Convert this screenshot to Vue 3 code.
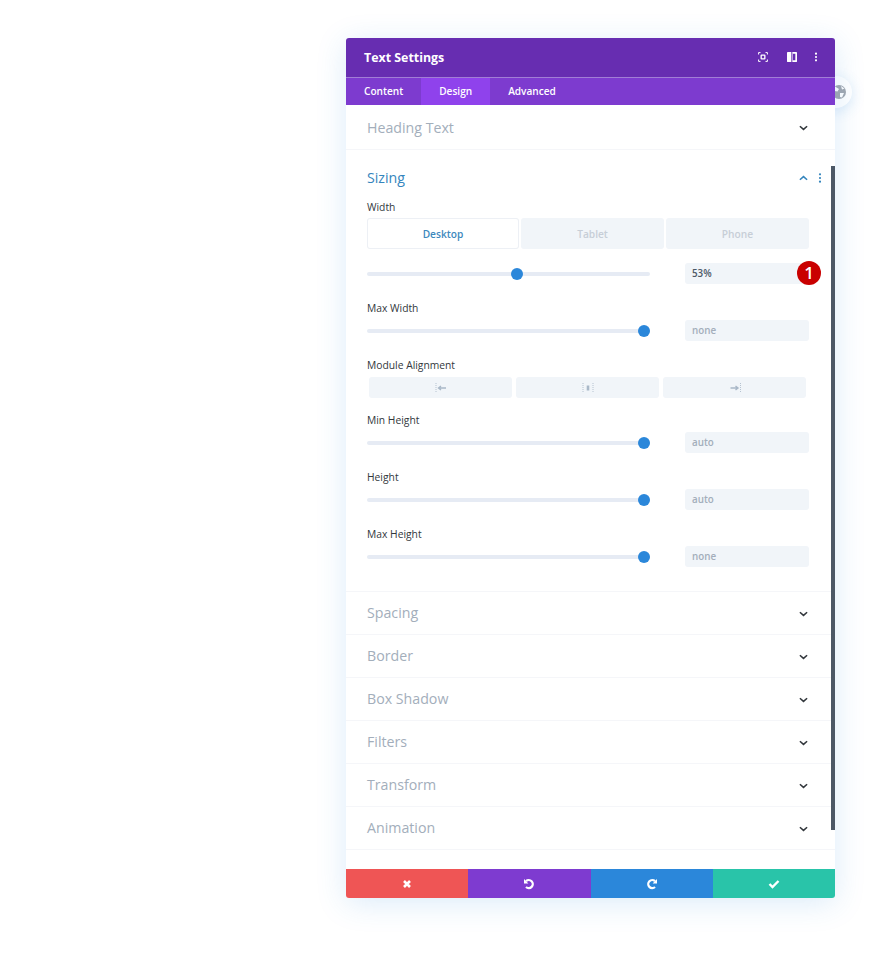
<script setup>
const closedTop = ["Spacing", "Border", "Box Shadow", "Filters", "Transform", "Animation"];
const sliders = [
  { label: "Max Width", value: "none" },
  { label: "Min Height", value: "auto" },
  { label: "Height", value: "auto" },
  { label: "Max Height", value: "none" },
];
</script>

<template>
  <main class="page">
    <div class="panel-wrap">
      <div class="portability">
        <svg class="globe" viewBox="0 0 14 14" width="14" height="14">
          <circle cx="7" cy="7" r="7" fill="#a3a8b0" />
          <path d="M3 1.5 L7 4 L5.5 6.5 L2.5 6 Z M8 8 L12 8 L10 12.5 L8 12 Z M9 1 L12.5 3.5 L10 4.5 Z" fill="#fff" />
        </svg>
      </div>
      <section class="panel">
        <header class="head">
          <h1>Text Settings</h1>
          <div class="head-icons">
            <svg class="ic-focus" viewBox="0 0 12 12" width="10" height="10" fill="none" stroke="#fff">
              <path d="M.7 3V.7H3M9 .7h2.3V3M11.3 9v2.3H9M3 11.3H.7V9" stroke-width="1.2" />
              <rect x="3.8" y="3.8" width="4.4" height="4.4" rx=".5" stroke-width="1.6" />
            </svg>
            <svg class="ic-cols" viewBox="0 0 12 12" width="10" height="10">
              <path d="M0 1a1 1 0 0 1 1-1h10a1 1 0 0 1 1 1v10a1 1 0 0 1-1 1H1a1 1 0 0 1-1-1z M7 2v8h3V2z" fill="#fff" fill-rule="evenodd" />
              <path d="M5.2 0h1.2v12H5.2z" fill="#6a2db4" />
            </svg>
            <svg viewBox="0 0 4 12" width="4" height="10" fill="#fff">
              <circle cx="2" cy="2" r="1.3" /><circle cx="2" cy="6" r="1.3" /><circle cx="2" cy="10" r="1.3" />
            </svg>
          </div>
        </header>
        <nav class="tabs">
          <a>Content</a>
          <a class="active">Design</a>
          <a>Advanced</a>
        </nav>

        <div class="body">
          <div class="scrollbar"></div>

          <div class="group first">
            <span class="group-title">Heading Text</span>
            <svg class="chev" viewBox="0 0 10 6" width="9" height="6"><path d="M1 1l4 3.6L9 1" /></svg>
          </div>

          <div class="sizing">
            <div class="sizing-head">
              <span class="group-title open">Sizing</span>
              <svg class="chev up" viewBox="0 0 10 6" width="9" height="6"><path d="M1 5L5 1.4 9 5" /></svg>
              <svg class="more" viewBox="0 0 4 10" width="4" height="10" fill="#3585bd">
                <circle cx="2" cy="1.3" r="1.1" /><circle cx="2" cy="5" r="1.1" /><circle cx="2" cy="8.7" r="1.1" />
              </svg>
            </div>

            <label class="field-label width-label">Width</label>
            <div class="devices">
              <button class="on">Desktop</button>
              <button>Tablet</button>
              <button>Phone</button>
            </div>
            <div class="slider-row first-slider">
              <div class="track"><span class="knob" style="left: 53%"></span></div>
              <div class="val dark">53%</div>
              <span class="badge">1</span>
            </div>

            <label class="field-label">{{ sliders[0].label }}</label>
            <div class="slider-row">
              <div class="track"><span class="knob" style="left: 98%"></span></div>
              <div class="val">{{ sliders[0].value }}</div>
            </div>

            <label class="field-label">Module Alignment</label>
            <div class="aligns">
              <button>
                <svg viewBox="0 0 12 10" width="12" height="10"><path d="M1 0v10" class="dots" /><path d="M11 5H3.5M6 3L3.5 5 6 7" class="arrow" /></svg>
              </button>
              <button>
                <svg viewBox="0 0 12 10" width="12" height="10"><path d="M1 0v10M11 0v10" class="dots" /><path d="M6 2.5v5" class="arrow wide" /></svg>
              </button>
              <button>
                <svg viewBox="0 0 12 10" width="12" height="10"><path d="M11.5 0v10" class="dots" /><path d="M1.5 5H9M6.5 3L9 5 6.5 7" class="arrow" /></svg>
              </button>
            </div>

            <template v-for="s in sliders.slice(1)" :key="s.label">
              <label class="field-label">{{ s.label }}</label>
              <div class="slider-row">
                <div class="track"><span class="knob" style="left: 98%"></span></div>
                <div class="val">{{ s.value }}</div>
              </div>
            </template>
          </div>

          <div v-for="name in closedTop" :key="name" class="group">
            <span class="group-title shifted">{{ name }}</span>
            <svg class="chev" viewBox="0 0 10 6" width="9" height="6"><path d="M1 1l4 3.6L9 1" /></svg>
          </div>
        </div>

        <footer class="foot">
          <button class="red">
            <svg viewBox="0 0 10 10" width="10" height="10"><path d="M2 2l6 6M8 2L2 8" stroke="#fff" stroke-width="2.6" fill="none" /></svg>
          </button>
          <button class="purple">
            <svg viewBox="0 0 12 12" width="12" height="12" fill="none" stroke="#fff" stroke-width="2.3">
              <path d="M3 3.2A4 4 0 1 1 3 9" /><path d="M1 1v4.4h4.4z" fill="#fff" stroke="none" />
            </svg>
          </button>
          <button class="blue">
            <svg viewBox="0 0 12 12" width="12" height="12" fill="none" stroke="#fff" stroke-width="2.3">
              <path d="M9 3.2A4 4 0 1 0 9 9" /><path d="M11 1v4.4H6.6z" fill="#fff" stroke="none" />
            </svg>
          </button>
          <button class="green">
            <svg viewBox="0 0 12 10" width="12" height="10"><path d="M1.5 5l3 3 6-6" stroke="#fff" stroke-width="2.4" fill="none" /></svg>
          </button>
        </footer>
      </section>
    </div>
  </main>
</template>

<style scoped>
.page {
  height: 958px;
  background: #fff;
  padding: 38px 0 0 346px;
  box-sizing: border-box;
  font-family: "Open Sans", "Liberation Sans", sans-serif;
  overflow: hidden;
}

.panel-wrap {
  position: relative;
  width: 489px;
}

.portability {
  position: absolute;
  left: 474px;
  top: 38px;
  width: 32px;
  height: 32px;
  border-radius: 50%;
  background: #fff;
  box-shadow: 0 3px 14px rgba(43, 135, 218, 0.18);
  display: flex;
  align-items: center;
  justify-content: center;
}

.globe {
  position: relative;
  left: 3px;
}

.panel {
  position: relative;
  height: 860px;
  display: flex;
  flex-direction: column;
  background: #fff;
  border-radius: 3px;
  overflow: hidden;
  box-shadow: 0 5px 30px rgba(43, 135, 218, 0.17);
}

.head {
  height: 38px;
  flex: none;
  background: #672db1;
  display: flex;
  align-items: center;
  justify-content: space-between;
  padding: 0 17px 1px 18px;
  border-bottom: 1px solid #a27dd6;
}

.head h1 {
  margin: 0;
  color: #fff;
  font-size: 12.4px;
  font-weight: 700;
}

.head-icons {
  display: flex;
  align-items: center;
}

.ic-focus {
  margin-right: 19px;
}

.ic-cols {
  margin-right: 17px;
}

.tabs {
  height: 27px;
  flex: none;
  display: flex;
  background: #7d3bcf;
}

.tabs a {
  padding: 0 18px;
  line-height: 26px;
  color: #fff;
  font-size: 10.1px;
  font-weight: 600;
}

.tabs a.active {
  background: #8f42ec;
}

.body {
  position: relative;
  flex: 1;
}

.scrollbar {
  position: absolute;
  right: 0;
  top: 61px;
  width: 4px;
  height: 664px;
  background: #4c5866;
}

.group {
  height: 42px;
  border-bottom: 1px solid #f5f6f9;
  display: flex;
  align-items: center;
  justify-content: space-between;
  padding: 0 27px 0 21px;
}

.group.first {
  height: 44px;
}

.group .chev {
  margin-top: 2px;
}

.group-title {
  font-size: 14.2px;
  color: #a3aebb;
}

.group-title.shifted {
  margin-bottom: 2px;
}

.group-title.open {
  color: #3585bd;
}

.chev {
  fill: none;
  stroke: #32373c;
  stroke-width: 1.7;
}

.chev.up {
  stroke: #3585bd;
  margin-left: auto;
}

.more {
  margin-left: 10px;
}

.sizing {
  height: 442px;
  box-sizing: border-box;
  border-bottom: 1px solid #f5f6f9;
  padding: 0 26px 0 21px;
}

.sizing-head {
  height: 47px;
  padding-top: 4px;
  display: flex;
  align-items: center;
  margin-right: -13px;
}

.field-label {
  display: block;
  height: 16px;
  line-height: 16px;
  font-size: 10.3px;
  font-weight: 400;
  color: #32373c;
}

.width-label {
  height: 12px;
  line-height: 12px;
  margin-bottom: 5px;
}

.devices {
  display: flex;
  gap: 2px;
  margin-bottom: 14px;
}

.devices button {
  flex: 1;
  height: 31px;
  border: none;
  border-radius: 3px;
  background: #f1f5f9;
  color: #c7ced7;
  font: 600 10.2px "Open Sans", sans-serif;
}

.devices button.on {
  flex: none;
  width: 152px;
  background: #fff;
  color: #3d88bd;
  box-shadow: inset 0 0 0 1px #edf0f5;
}

.slider-row {
  position: relative;
  height: 21px;
  display: flex;
  align-items: center;
  justify-content: space-between;
  margin: 4px 0 16px;
}

.first-slider {
  margin-top: 0;
  margin-bottom: 16px;
}

.track {
  position: relative;
  width: 283px;
  height: 4px;
  margin-top: 1px;
  border-radius: 2px;
  background: #e6ebf4;
}

.knob {
  position: absolute;
  top: -4px;
  width: 12px;
  height: 12px;
  margin-left: -6px;
  border-radius: 50%;
  background: #2b87da;
}

.val {
  width: 124px;
  height: 21px;
  box-sizing: border-box;
  padding-left: 7px;
  line-height: 22px;
  border-radius: 3px;
  background: #f1f5f9;
  color: #a3aebb;
  font-size: 9.8px;
  font-weight: 600;
}

.val.dark {
  color: #4c5866;
}

.badge {
  position: absolute;
  left: 430px;
  top: -2px;
  width: 24px;
  height: 24px;
  border-radius: 50%;
  background: #c90000;
  color: #fff;
  font-size: 17px;
  font-weight: 600;
  line-height: 24px;
  text-align: center;
}

.aligns {
  display: flex;
  gap: 4px;
  margin: 4px 3px 14px 2px;
}

.aligns button {
  flex: 1;
  height: 21px;
  border: none;
  border-radius: 3px;
  background: #f1f5f9;
  padding: 0;
  display: flex;
  align-items: center;
  justify-content: center;
}

.dots {
  stroke: #b5c2d0;
  stroke-width: 1;
  stroke-dasharray: 1 1;
  fill: none;
}

.arrow {
  stroke: #a9b8c8;
  stroke-width: 1.4;
  fill: none;
}

.arrow.wide {
  stroke-width: 2.6;
}

.foot {
  position: absolute;
  left: 0;
  right: 0;
  bottom: 0;
  height: 29px;
  display: flex;
}

.foot button {
  flex: 1;
  border: none;
  padding: 0;
  display: flex;
  align-items: center;
  justify-content: center;
}

.red { background: #ef5555; }
.purple { background: #7e3bd0; }
.blue { background: #2b87da; }
.green { background: #29c4a9; }
</style>
